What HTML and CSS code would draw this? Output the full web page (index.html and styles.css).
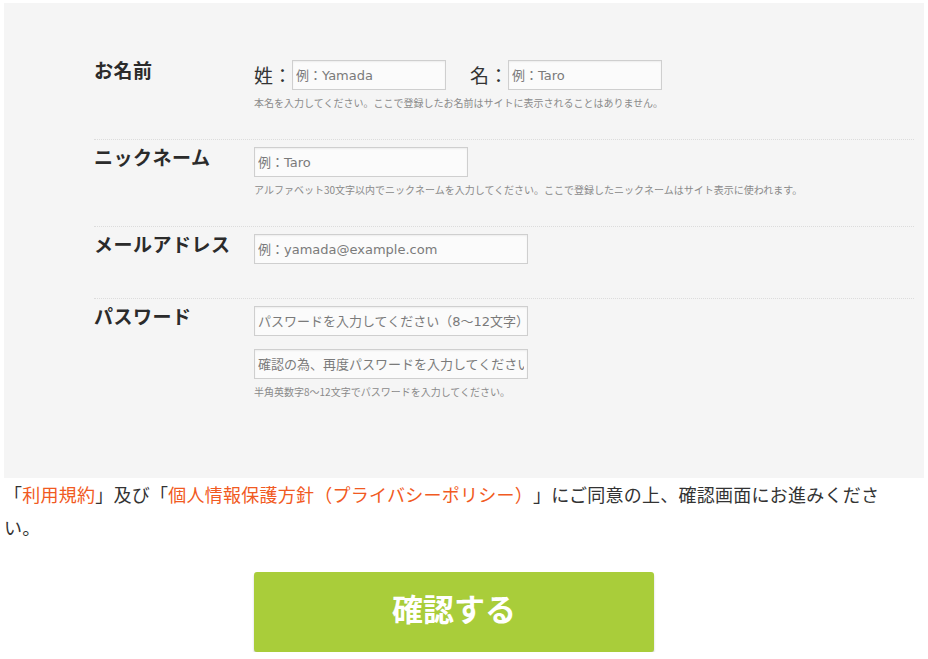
FILE: index.html
```html
<!DOCTYPE html>
<html lang="ja">
<head>
<meta charset="utf-8">
<link rel="stylesheet" href="styles.css">
</head>
<body>
<div class="panel">
  <div class="row">
    <div class="label">お名前</div>
    <div class="field">
      <div class="name-line">
        <span class="prefix">姓：</span><input class="inp w154" type="text" placeholder="例：Yamada">
        <span class="prefix gap">名：</span><input class="inp w154" type="text" placeholder="例：Taro">
      </div>
      <p class="help">本名を入力してください。ここで登録したお名前はサイトに表示されることはありません。</p>
    </div>
  </div>
  <div class="row sep">
    <div class="label">ニックネーム</div>
    <div class="field">
      <input class="inp w214" type="text" placeholder="例：Taro">
      <p class="help">アルファベット30文字以内でニックネームを入力してください。ここで登録したニックネームはサイト表示に使われます。</p>
    </div>
  </div>
  <div class="row sep nohelp">
    <div class="label">メールアドレス</div>
    <div class="field">
      <input class="inp w274" type="text" placeholder="例：yamada@example.com">
    </div>
  </div>
  <div class="row sep last">
    <div class="label">パスワード</div>
    <div class="field">
      <input class="inp w274" type="password" placeholder="パスワードを入力してください（8〜12文字）">
      <input class="inp w274 second" type="password" placeholder="確認の為、再度パスワードを入力してください">
      <p class="help">半角英数字8〜12文字でパスワードを入力してください。</p>
    </div>
  </div>
</div>
<p class="agree">「<a href="#" class="link">利用規約</a>」及び「<a href="#" class="link">個人情報保護方針（プライバシーポリシー）</a>」にご同意の上、確認画面にお進みください。</p>
<div class="actions">
  <button class="submit" type="button">確認する</button>
</div>
</body>
</html>
```
FILE: styles.css
```css
html, body {
  margin: 0;
  padding: 0;
  background: #fff;
}
body {
  font-family: "Noto Sans CJK JP", "DejaVu Sans", sans-serif;
  color: #333;
  text-spacing-trim: space-all;
}
.panel {
  margin: 3px 4px 0 4px;
  width: 920px;
  height: 475px;
  box-sizing: border-box;
  background: #f5f5f5;
  padding: 49px 10px 0 90px;
}
.row {
  display: flex;
  padding: 8px 0 29px 0;
}
.row.sep {
  border-top: 1px dotted #dcdcdc;
  padding-top: 7px;
}
.row.nohelp {
  padding-bottom: 34px;
}
.row.last {
  padding-bottom: 0;
}
.label {
  width: 160px;
  flex: none;
  font-size: 19px;
  font-weight: bold;
  line-height: 20px;
  color: #2b2b2b;
  letter-spacing: 0.5px;
}
.field {
  display: flex;
  flex-direction: column;
  align-items: flex-start;
}
.name-line {
  display: flex;
  align-items: center;
}
.prefix {
  font-size: 19px;
  line-height: 30px;
  width: 38px;
  color: #333;
}
.prefix.gap {
  margin-left: 24px;
  width: 38px;
}
.inp {
  box-sizing: border-box;
  height: 30px;
  margin: 0;
  padding: 0 3px;
  border: 1px solid #cfcfcf;
  background: #fbfbfb;
  box-shadow: inset 0 1px 2px rgba(0,0,0,0.06);
  font-family: "DejaVu Sans", "Noto Sans CJK JP", sans-serif;
  font-size: 13px;
  color: #333;
  outline: none;
  text-spacing-trim: space-all;
}
.inp::placeholder {
  color: #7a7a7a;
  opacity: 1;
}
.w154 { width: 154px; }
.w214 { width: 214px; }
.w274 { width: 274px; }
.second { margin-top: 13px; }
.help {
  margin: 6px 0 0 0;
  font-size: 10px;
  line-height: 14px;
  color: #8a8a8a;
}
.agree {
  margin: 0 0 0 4px;
  width: 880px;
  font-size: 18px;
  line-height: 33px;
  letter-spacing: 0.25px;
  color: #333;
}
.link {
  color: #f15a22;
  text-decoration: none;
}
.actions {
  padding: 28px 0 0 254px;
}
.submit {
  width: 400px;
  height: 80px;
  padding: 0 0 10px 0;
  border: none;
  border-radius: 3px;
  background: #a9cd3a;
  box-shadow: 0 2px 2px rgba(0,0,0,0.22);
  color: #fff;
  font-family: "Noto Sans CJK JP", sans-serif;
  font-size: 31px;
  font-weight: bold;
  cursor: pointer;
}
```
